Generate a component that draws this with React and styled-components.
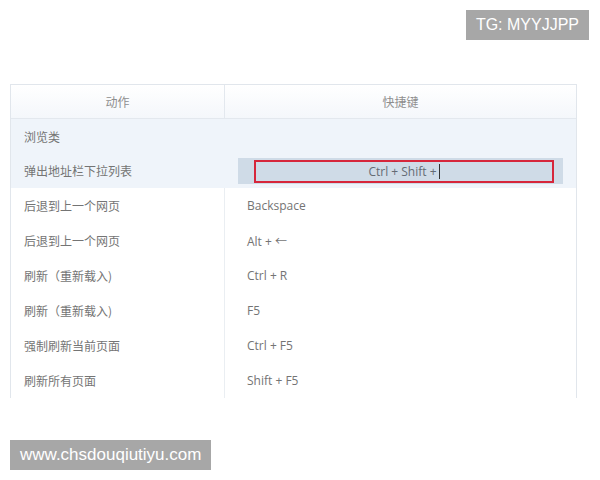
import React from "react";
import styled, { createGlobalStyle } from "styled-components";

const Global = createGlobalStyle`
  html, body { margin: 0; padding: 0; background: #ffffff; }
  body { width: 600px; height: 480px; overflow: hidden; }
`;

const Page = styled.div`
  width: 600px;
  height: 480px;
  display: flex;
  flex-direction: column;
  box-sizing: border-box;
  padding: 10px 11px 0 10px;
`;

const Badge = styled.div`
  align-self: ${(p) => (p.$right ? "flex-end" : "flex-start")};
  height: 30px;
  line-height: 30px;
  padding: 0 ${(p) => p.$pad}px;
  background: #a7a7a7;
  color: #ffffff;
  font-family: "Liberation Sans", Arial, sans-serif;
  font-size: ${(p) => p.$size}px;
  margin-top: ${(p) => p.$top || 0}px;
`;

const Table = styled.div`
  margin-top: 44px;
  width: 567px;
  height: 314px;
  box-sizing: border-box;
  border-left: 1px solid #e1e6ec;
  border-right: 1px solid #e1e6ec;
  border-top: 1px solid #e1e6ec;
  display: flex;
  flex-direction: column;
  font-size: 12px;
  color: #747474;
`;

const Row = styled.div`
  display: grid;
  grid-template-columns: 214px 1fr;
  height: ${(p) => p.$h}px;
  background: ${(p) => p.$bg || "#ffffff"};
  border-bottom: ${(p) => (p.$line ? "1px solid #e3e8ee" : "none")};
  box-sizing: border-box;
  flex: none;
`;

const HeadCell = styled.div`
  display: flex;
  align-items: center;
  justify-content: center;
  color: #8e8e8e;
  font-family: "Noto Sans CJK SC", sans-serif;
  border-right: ${(p) => (p.$divider ? "1px solid #e3e8ee" : "none")};
`;

const Cell = styled.div`
  display: flex;
  align-items: center;
  padding-left: ${(p) => p.$pl}px;
  font-family: ${(p) => (p.$cjk ? `"Noto Sans CJK SC", sans-serif` : `"Open Sans", "Noto Sans CJK SC", sans-serif`)};
  border-right: ${(p) => (p.$divider ? "1px solid #eaeef2" : "none")};
  grid-column: ${(p) => (p.$span ? "1 / -1" : "auto")};
  white-space: nowrap;
`;

const KeyBar = styled.div`
  width: 325px;
  height: 26px;
  margin-top: 1px;
  background: #cfdbe7;
  display: flex;
  align-items: center;
`;

const KeyInput = styled.div`
  margin-left: 16px;
  width: 300px;
  height: 23px;
  box-sizing: border-box;
  border: 2px solid #d6263b;
  display: flex;
  align-items: center;
  justify-content: center;
  color: #646b74;
  font-family: "Open Sans", sans-serif;
  font-size: 12px;
`;

const Caret = styled.span`
  display: inline-block;
  width: 1px;
  height: 15px;
  background: #333;
  margin-left: 2px;
`;

const rows = [
  ["后退到上一个网页", "Backspace"],
  ["后退到上一个网页", "Alt + ←"],
  ["刷新（重新载入)", "Ctrl + R"],
  ["刷新（重新载入)", "F5"],
  ["强制刷新当前页面", "Ctrl + F5"],
  ["刷新所有页面", "Shift + F5"],
];

export default function App() {
  return (
    <>
      <Global />
      <Page>
        <Badge $right $pad={10} $size={16}>TG: MYYJJPP</Badge>
        <Table>
          <Row $h={34} $line $bg="linear-gradient(#ffffff, #f4f7fb)">
            <HeadCell $divider>动作</HeadCell>
            <HeadCell>快捷键</HeadCell>
          </Row>
          <Row $h={34} $bg="#eff4fa">
            <Cell $pl={13} $cjk $span>浏览类</Cell>
          </Row>
          <Row $h={35} $bg="#eff4fa">
            <Cell $pl={13} $cjk>弹出地址栏下拉列表</Cell>
            <Cell $pl={13}>
              <KeyBar>
                <KeyInput>
                  Ctrl + Shift +<Caret />
                </KeyInput>
              </KeyBar>
            </Cell>
          </Row>
          {rows.map(([a, k], i) => (
            <Row key={i} $h={35}>
              <Cell $pl={13} $cjk $divider>{a}</Cell>
              <Cell $pl={22}>{k}</Cell>
            </Row>
          ))}
        </Table>
        <Badge $pad={10} $size={17} $top={42}>www.chsdouqiutiyu.com</Badge>
      </Page>
    </>
  );
}
